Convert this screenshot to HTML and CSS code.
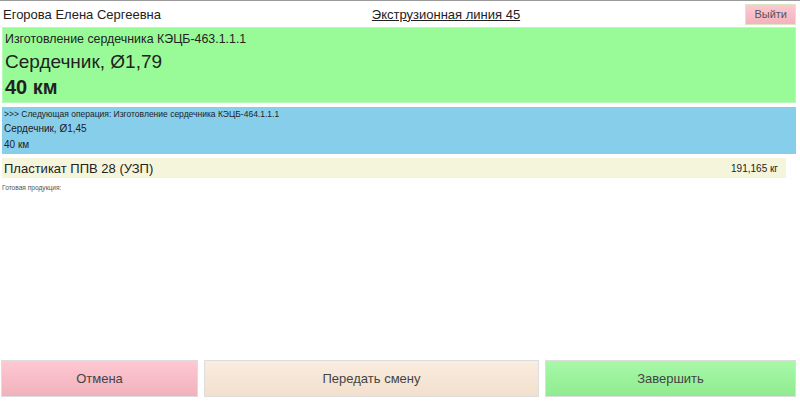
FILE: index.html
```html
<!DOCTYPE html>
<html lang="ru">
  <head>
    <meta charset="UTF-8">
    <title>Экструзионная линия 45</title>
    <link rel="stylesheet" href="styles.css">
  </head>
  <body>
    <div id="shapka">
      <div class="operador">Егорова Елена Сергеевна</div>
      <div class="linha"><a href="#">Экструзионная линия 45</a></div>
      <div class="sair"><button id="vyjti">Выйти</button></div>
    </div>

    <div id="tekushchaya">
      <div class="oper">Изготовление сердечника КЭЦБ-463.1.1.1</div>
      <div class="izdelie">Сердечник, Ø1,79</div>
      <div class="dlina">40 км</div>
    </div>

    <div id="sleduyushchaya">
      <div class="oper">&gt;&gt;&gt; Следующая операция: Изготовление сердечника КЭЦБ-464.1.1.1</div>
      <div class="izdelie">Сердечник, Ø1,45</div>
      <div class="dlina">40 км</div>
    </div>

    <div id="material">
      <span class="nazvanie">Пластикат ППВ 28 (УЗП)</span>
      <span class="ves">191,165 кг</span>
    </div>

    <div id="gotovaya">Готовая продукция:</div>

    <div id="knopki">
      <button id="otmena" class="big-btn">Отмена</button>
      <button id="peredat" class="big-btn">Передать смену</button>
      <button id="zavershit" class="big-btn">Завершить</button>
    </div>
  </body>
</html>
```

FILE: styles.css
```css
html, body {
  height: 100%;
}
body {
  font-family: "Liberation Sans", Arial, sans-serif;
  color: #222;
  background-color: #fff;
  margin: 0;
  border-top: 1px solid #9a9a9a;
  box-sizing: border-box;
  display: flex;
  flex-direction: column;
}
#shapka {
  display: grid;
  grid-template-columns: 1fr 1fr 1fr;
  align-items: center;
  height: 26px;
  padding: 0 3px;
  font-size: 13px;
}
#shapka .linha {
  text-align: center;
  white-space: nowrap;
  padding-left: 92px;
}
#shapka .linha a {
  color: #222;
  text-decoration: underline;
}
#shapka .sair {
  text-align: right;
}
#vyjti {
  font-family: inherit;
  font-size: 11px;
  color: #555;
  background: linear-gradient(#ffc8d2, #f4b2bd);
  border: 1px solid #d4ecc0;
  padding: 3px 8px;
  margin-right: 1px;
  height: 21px;
}
#tekushchaya {
  margin: 0 4px 0 2px;
  background-color: #98fb98;
  border: 1px solid #b8f8b8;
  padding: 2px 2px 3px;
  height: 69px;
}
#tekushchaya .oper {
  font-size: 12.4px;
  line-height: 18px;
}
#tekushchaya .izdelie {
  font-size: 19px;
  line-height: 27px;
}
#tekushchaya .dlina {
  font-size: 20px;
  font-weight: bold;
  line-height: 25px;
}
#sleduyushchaya {
  margin: 4px 4px 0 2px;
  background-color: #87ceeb;
  padding: 1px 2px 2px;
  height: 44px;
}
#sleduyushchaya .oper {
  font-size: 8.5px;
  line-height: 13px;
}
#sleduyushchaya .izdelie,
#sleduyushchaya .dlina {
  font-size: 10px;
  line-height: 16px;
}
#material {
  margin: 4px 14px 0 2px;
  background-color: #f5f5dc;
  height: 20px;
  padding: 0 8px 0 2px;
  display: flex;
  justify-content: space-between;
  align-items: center;
}
#material .nazvanie {
  font-size: 13px;
}
#material .ves {
  font-size: 10px;
}
#gotovaya {
  font-size: 6.6px;
  color: #555;
  margin: 6px 0 0 2px;
}
#knopki {
  margin-top: auto;
  display: grid;
  grid-template-columns: 197px 335px 251px;
  gap: 6px;
  padding: 0 4px 4px 1px;
}
.big-btn {
  font-family: inherit;
  font-size: 13px;
  color: #444;
  height: 37px;
  border: 1px solid #ddd;
  cursor: pointer;
}
#otmena {
  background: linear-gradient(#ffc8d2, #f0b2bd);
}
#peredat {
  background: linear-gradient(#faece0, #f2e0cc);
}
#zavershit {
  background: linear-gradient(#a8f8a8, #90ec90);
}
```
